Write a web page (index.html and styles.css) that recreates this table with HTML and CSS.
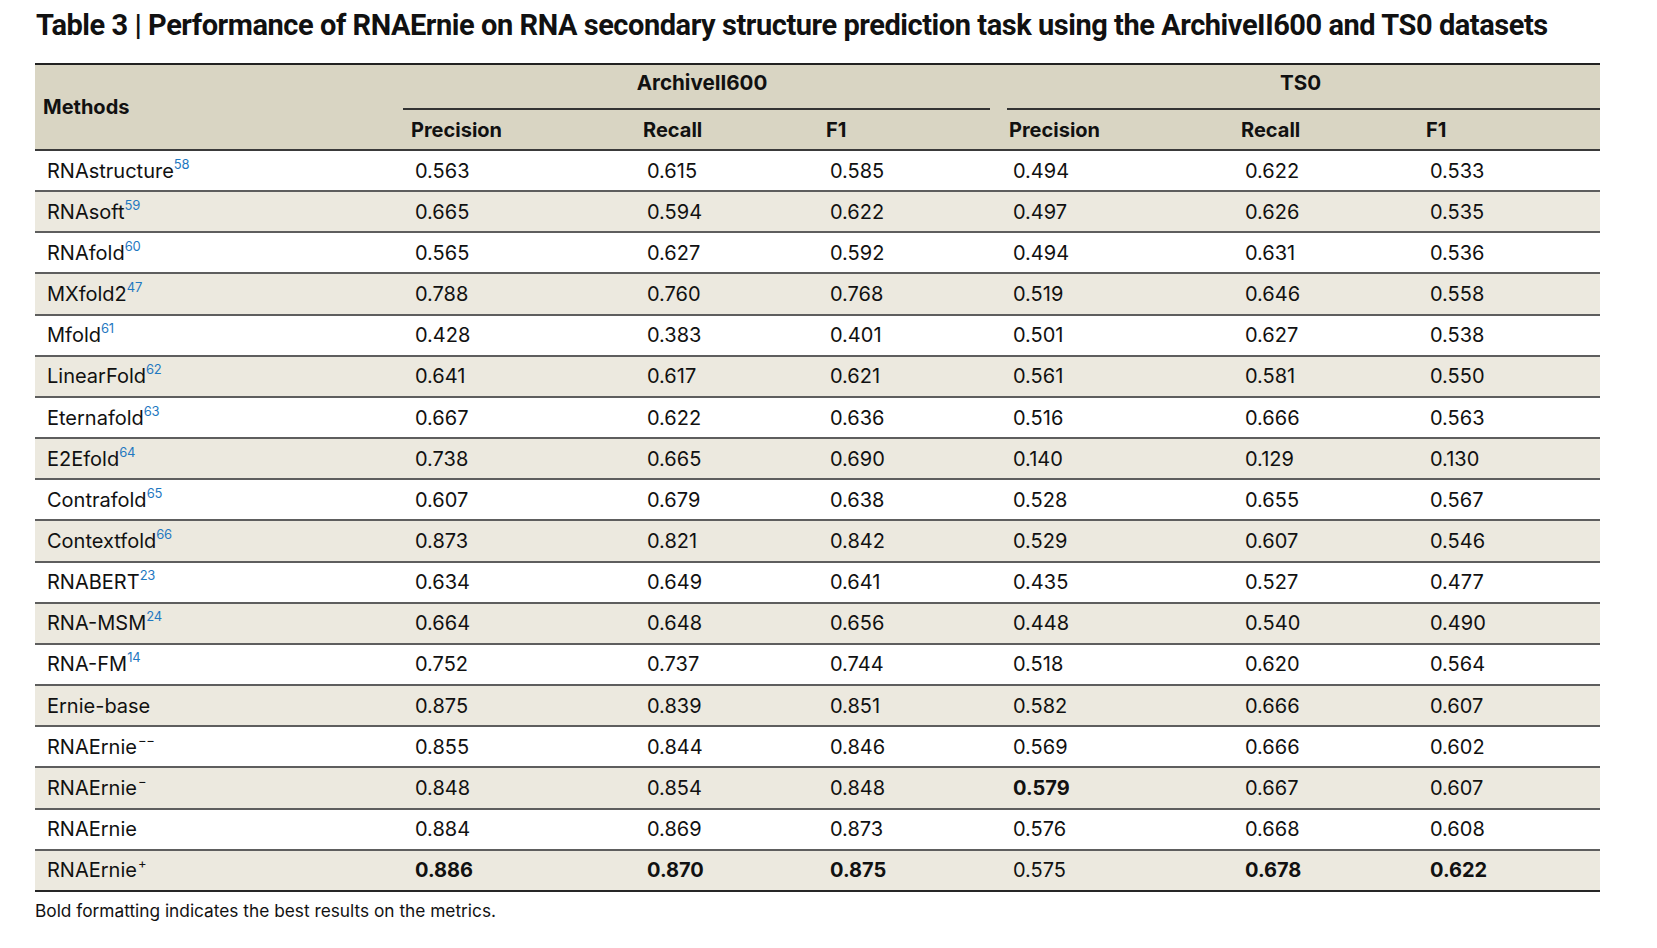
FILE: index.html
```html
<!DOCTYPE html>
<html lang="en">
<head>
<meta charset="utf-8">
<title>Table 3</title>
<link rel="stylesheet" href="styles.css">
</head>
<body>
<div class="page">
  <h1 class="title">Table 3 | Performance of RNAErnie on RNA secondary structure prediction task using the ArchiveII600 and TS0 datasets</h1>
  <table class="results">
    <colgroup>
      <col class="c-method">
      <col class="c-prec">
      <col class="c-rec">
      <col class="c-f1">
      <col class="c-prec2">
      <col class="c-rec2">
      <col class="c-f12">
    </colgroup>
    <thead>
      <tr class="group-row">
        <th rowspan="2" class="methods">Methods</th>
        <th colspan="3" class="group"><div class="group-label">ArchiveII600</div><div class="group-rule left"></div></th>
        <th colspan="3" class="group"><div class="group-label">TS0</div><div class="group-rule right"></div></th>
      </tr>
      <tr class="sub-row">
        <th>Precision</th><th>Recall</th><th>F1</th>
        <th>Precision</th><th>Recall</th><th>F1</th>
      </tr>
    </thead>
    <tbody>
      <tr><td>RNAstructure<sup class="ref">58</sup></td><td>0.563</td><td>0.615</td><td>0.585</td><td>0.494</td><td>0.622</td><td>0.533</td></tr>
      <tr><td>RNAsoft<sup class="ref">59</sup></td><td>0.665</td><td>0.594</td><td>0.622</td><td>0.497</td><td>0.626</td><td>0.535</td></tr>
      <tr><td>RNAfold<sup class="ref">60</sup></td><td>0.565</td><td>0.627</td><td>0.592</td><td>0.494</td><td>0.631</td><td>0.536</td></tr>
      <tr><td>MXfold2<sup class="ref">47</sup></td><td>0.788</td><td>0.760</td><td>0.768</td><td>0.519</td><td>0.646</td><td>0.558</td></tr>
      <tr><td>Mfold<sup class="ref">61</sup></td><td>0.428</td><td>0.383</td><td>0.401</td><td>0.501</td><td>0.627</td><td>0.538</td></tr>
      <tr><td>LinearFold<sup class="ref">62</sup></td><td>0.641</td><td>0.617</td><td>0.621</td><td>0.561</td><td>0.581</td><td>0.550</td></tr>
      <tr><td>Eternafold<sup class="ref">63</sup></td><td>0.667</td><td>0.622</td><td>0.636</td><td>0.516</td><td>0.666</td><td>0.563</td></tr>
      <tr><td>E2Efold<sup class="ref">64</sup></td><td>0.738</td><td>0.665</td><td>0.690</td><td>0.140</td><td>0.129</td><td>0.130</td></tr>
      <tr><td>Contrafold<sup class="ref">65</sup></td><td>0.607</td><td>0.679</td><td>0.638</td><td>0.528</td><td>0.655</td><td>0.567</td></tr>
      <tr><td>Contextfold<sup class="ref">66</sup></td><td>0.873</td><td>0.821</td><td>0.842</td><td>0.529</td><td>0.607</td><td>0.546</td></tr>
      <tr><td>RNABERT<sup class="ref">23</sup></td><td>0.634</td><td>0.649</td><td>0.641</td><td>0.435</td><td>0.527</td><td>0.477</td></tr>
      <tr><td>RNA-MSM<sup class="ref">24</sup></td><td>0.664</td><td>0.648</td><td>0.656</td><td>0.448</td><td>0.540</td><td>0.490</td></tr>
      <tr><td>RNA-FM<sup class="ref">14</sup></td><td>0.752</td><td>0.737</td><td>0.744</td><td>0.518</td><td>0.620</td><td>0.564</td></tr>
      <tr><td>Ernie-base</td><td>0.875</td><td>0.839</td><td>0.851</td><td>0.582</td><td>0.666</td><td>0.607</td></tr>
      <tr><td>RNAErnie<sup class="mod">−−</sup></td><td>0.855</td><td>0.844</td><td>0.846</td><td>0.569</td><td>0.666</td><td>0.602</td></tr>
      <tr><td>RNAErnie<sup class="mod">−</sup></td><td>0.848</td><td>0.854</td><td>0.848</td><td class="best">0.579</td><td>0.667</td><td>0.607</td></tr>
      <tr><td>RNAErnie</td><td>0.884</td><td>0.869</td><td>0.873</td><td>0.576</td><td>0.668</td><td>0.608</td></tr>
      <tr><td>RNAErnie<sup class="mod">+</sup></td><td class="best">0.886</td><td class="best">0.870</td><td class="best">0.875</td><td>0.575</td><td class="best">0.678</td><td class="best">0.622</td></tr>
    </tbody>
  </table>
  <p class="note">Bold formatting indicates the best results on the metrics.</p>
</div>
</body>
</html>
```

FILE: styles.css
```css
html, body {
  margin: 0;
  padding: 0;
  background: #ffffff;
}

.page {
  padding: 8px 0 0 35px;
  color: #111111;
  font-family: Inter, "Liberation Sans", sans-serif;
}

.title {
  margin: 0 0 21px 1px;
  font-family: Roboto, "Liberation Sans", sans-serif;
  font-weight: 700;
  font-size: 29px;
  line-height: 34px;
  letter-spacing: -0.45px;
  color: #111111;
  white-space: nowrap;
}

.results {
  width: 1565px;
  table-layout: fixed;
  border-collapse: separate;
  border-spacing: 0;
  border-top: 2px solid #222222;
  font-size: 20px;
}

.c-method { width: 368px; }
.c-prec { width: 232px; }
.c-rec { width: 183px; }
.c-f1 { width: 183px; }
.c-prec2 { width: 232px; }
.c-rec2 { width: 185px; }
.c-f12 { width: 182px; }

.results thead th {
  background: #d9d5c3;
  font-weight: 700;
  text-align: left;
  padding: 0 0 0 8px;
  color: #111111;
}

.results thead th.methods {
  border-bottom: 2px solid #3a3a3a;
  padding-left: 8px;
}

.results thead th.group {
  padding: 0;
  text-align: center;
  height: 45px;
  vertical-align: top;
}

.group-label {
  height: 43px;
  line-height: 36px;
  font-size: 20.6px;
}

.group-rule {
  border-top: 2px solid #333333;
}

.group-rule.left {
  margin-right: 11px;
}

.group-rule.right {
  margin-left: 6px;
}

.sub-row th {
  height: 39px;
  border-bottom: 2px solid #3a3a3a;
}

.results td {
  height: 39.17px;
  padding: 0 0 0 12px;
  border-bottom: 2px solid #5e5e5e;
  vertical-align: middle;
  white-space: nowrap;
}

.results tbody tr:nth-child(even) td {
  background: #ece9df;
}

.results tbody tr:last-child td {
  border-bottom-color: #262626;
}

.results td.best {
  font-weight: 700;
}

.ref,
.mod {
  font-size: 13px;
  line-height: 0;
  vertical-align: 9px;
  letter-spacing: -0.3px;
}

.ref {
  color: #1f78c1;
}

.mod {
  color: #111111;
  margin-left: 1px;
}

.note {
  margin: 9px 0 0 0;
  font-size: 17.3px;
  line-height: 20px;
  color: #111111;
}
```
